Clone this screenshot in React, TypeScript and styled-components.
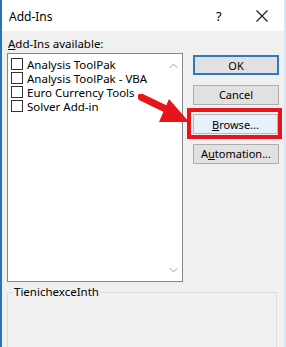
import styled, { createGlobalStyle } from 'styled-components';

const GlobalStyle = createGlobalStyle`
  html, body {
    margin: 0;
    padding: 0;
    background: #f0f0f0;
  }
  * {
    box-sizing: border-box;
  }
`;

const addIns = ['Analysis ToolPak', 'Analysis ToolPak - VBA', 'Euro Currency Tools', 'Solver Add-in'];

export default function App() {
  return (
    <>
      <GlobalStyle />
      <StyledWindow>
        <StyledTitleBar>
          <StyledTitle>Add-Ins</StyledTitle>
          <StyledHelp>?</StyledHelp>
          <StyledClose>
            <svg width="12" height="12" viewBox="0 0 12 12">
              <path d="M0.5 0.5 L11.5 11.5 M11.5 0.5 L0.5 11.5" stroke="#1a1a1a" strokeWidth="1.1" />
            </svg>
          </StyledClose>
        </StyledTitleBar>
        <StyledBody>
          <StyledTop>
            <StyledLeft>
              <StyledLabel>
                <u>A</u>dd-Ins available:
              </StyledLabel>
              <StyledList>
                <StyledItems>
                  {addIns.map((name) => (
                    <StyledRow key={name}>
                      <StyledCheck />
                      <span>{name}</span>
                    </StyledRow>
                  ))}
                </StyledItems>
                <StyledScroll>
                  <svg width="9" height="6" viewBox="0 0 9 6">
                    <path d="M0.5 5 L4.5 1 L8.5 5" fill="none" stroke="#c8c8c8" strokeWidth="1.2" />
                  </svg>
                  <svg width="9" height="6" viewBox="0 0 9 6">
                    <path d="M0.5 1 L4.5 5 L8.5 1" fill="none" stroke="#c8c8c8" strokeWidth="1.2" />
                  </svg>
                </StyledScroll>
              </StyledList>
            </StyledLeft>
            <StyledButtons>
              <StyledButton $primary>OK</StyledButton>
              <StyledButton>Cancel</StyledButton>
              <StyledHighlight>
                <StyledButton $hover>
                  <u>B</u>rowse...
                </StyledButton>
              </StyledHighlight>
              <StyledButton>
                A<u>u</u>tomation...
              </StyledButton>
            </StyledButtons>
          </StyledTop>
          <StyledGroup>
            <StyledLegend>TienichexceInth</StyledLegend>
          </StyledGroup>
        </StyledBody>
        <StyledArrow width="70" height="45" viewBox="0 0 70 45">
          <path d="M3 3 L34 18" stroke="#e8141b" strokeWidth="7" strokeLinecap="round" />
          <path d="M51 28 L31 5 L21 28 Z" fill="#e8141b" />
        </StyledArrow>
      </StyledWindow>
    </>
  );
}

const StyledWindow = styled.div`
  position: relative;
  width: 286px;
  height: 347px;
  overflow: hidden;
  background: #f0f0f0;
  border-left: 2px solid #2b73b8;
  border-right: 2px solid #d6e6f5;
  font-family: 'Noto Sans', 'Open Sans', sans-serif;
  font-size: 11px;
  color: #000;
`;

const StyledTitleBar = styled.div`
  height: 31px;
  background: #fff;
  display: flex;
  align-items: center;
  padding-left: 7px;
`;

const StyledTitle = styled.div`
  flex: 1;
  font-size: 12px;
  padding-top: 1px;
`;

const StyledHelp = styled.div`
  width: 14px;
  margin-right: 26px;
  font-size: 13px;
`;

const StyledClose = styled.div`
  width: 12px;
  height: 12px;
  margin-right: 16px;
  display: flex;
`;

const StyledBody = styled.div`
  padding: 5px 5px 0 5px;
`;

const StyledTop = styled.div`
  display: flex;
  gap: 10px;
`;

const StyledLeft = styled.div`
  display: flex;
  flex-direction: column;
  width: 176px;
`;

const StyledLabel = styled.div`
  height: 17px;
  line-height: 15px;
  padding-left: 1px;
  font-size: 11.5px;
`;

const StyledList = styled.div`
  height: 229px;
  background: #fff;
  border: 1px solid #828790;
  display: flex;
`;

const StyledItems = styled.div`
  flex: 1;
  padding: 3px 0 0 3px;
`;

const StyledRow = styled.div`
  display: flex;
  align-items: center;
  gap: 4px;
  height: 14px;
  line-height: 13px;
  font-size: 11.5px;
`;

const StyledCheck = styled.div`
  width: 12px;
  height: 12px;
  border: 1px solid #333;
  background: #fff;
  flex: none;
`;

const StyledScroll = styled.div`
  width: 17px;
  display: flex;
  flex-direction: column;
  justify-content: space-between;
  align-items: center;
  padding: 9px 0 8px;
`;

const StyledButtons = styled.div`
  display: flex;
  flex-direction: column;
  gap: 9.5px;
  padding-top: 19px;
  width: 86px;
`;

const StyledButton = styled.div<{ $primary?: boolean; $hover?: boolean }>`
  height: 20px;
  display: flex;
  align-items: center;
  justify-content: center;
  background: ${(p) => (p.$hover ? '#e5f1fb' : '#e1e1e1')};
  border: ${(p) => (p.$primary ? '2px solid #2f79c2' : p.$hover ? '1px solid #b8b8b8' : '1px solid #adadad')};
`;

const StyledHighlight = styled.div`
  margin: -6px -3px -5px -6px;
  padding: 2px 0 1px 2px;
  border: 4px solid #e8141b;
`;

const StyledGroup = styled.div`
  margin-top: 10px;
  margin-right: 2px;
  height: 80px;
  border: 1px solid #dcdcdc;
  position: relative;
`;

const StyledLegend = styled.div`
  position: absolute;
  top: -9px;
  left: 5px;
  padding: 0 1px;
  background: #f0f0f0;
  font-size: 11.5px;
`;

const StyledArrow = styled.svg`
  position: absolute;
  left: 136px;
  top: 94px;
`;
